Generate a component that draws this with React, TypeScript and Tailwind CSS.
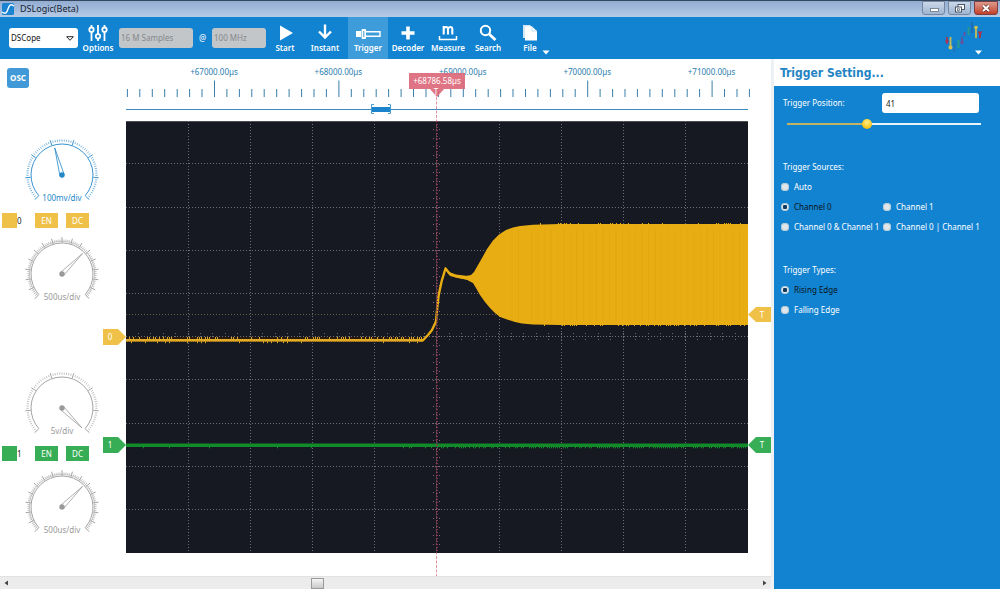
import React, { useState } from "react";

const range = (n: number) => Array.from({ length: n }, (_, i) => i);
const noise = (i: number) => {
  const v = Math.sin(i * 12.9898) * 43758.5453;
  return v - Math.floor(v);
};
const polar = (r: number, deg: number) => {
  const a = (deg * Math.PI) / 180;
  return [(r * Math.sin(a)).toFixed(2), (-r * Math.cos(a)).toFixed(2)];
};
const arc = (r: number, from: number, to: number) =>
  `M${polar(r, from).join(" ")}A${r} ${r} 0 1 1 ${polar(r, to).join(" ")}`;

/* ---------- Dial ---------- */

type DialProps = { label: string; needle: number; color: string; fine?: boolean };

function Dial({ label, needle, color, fine }: DialProps) {
  const count = fine ? 80 : 70;
  const major = fine ? 5 : 10;
  const tip = polar(fine ? 29 : 28, needle).join(" ");
  const left = polar(2.2, needle - 90).join(" ");
  const right = polar(2.2, needle + 90).join(" ");
  return (
    <svg viewBox="-38 -38 76 68" className="ml-6 h-[68px] w-[76px]" role="img" aria-label={label}>
      <g fill="none" stroke={color}>
        <path d={arc(31, -132, 132)} strokeWidth="0.9" />
        {fine && <path d={arc(32.6, -132, 132)} strokeWidth="0.5" />}
        {range(count + 1).map((i) => {
          const deg = -132 + (264 * i) / count;
          const big = i % major === 0;
          const inner = big ? 31.5 : fine ? 32.6 : 33.4;
          const outer = big ? 36.8 : fine ? 34.6 : 35.6;
          return (
            <path
              key={i}
              d={`M${polar(inner, deg).join(" ")}L${polar(outer, deg).join(" ")}`}
              strokeWidth={big ? 0.9 : 0.6}
            />
          );
        })}
        <path d={`M${left}L${tip}L${right}`} strokeWidth="0.8" />
      </g>
      <circle r="2.7" fill={color} />
      <text y="26" textAnchor="middle" fontSize="8" fill={color}>
        {label}
      </text>
    </svg>
  );
}

function ChannelRow({ index, tone }: { index: number; tone: string }) {
  return (
    <div className="flex h-[15px] items-stretch pl-[2px] text-[8px] leading-[15px]">
      <span className={`w-[15px] ${tone}`} />
      <span className="w-[18px] text-[#222]">{index}</span>
      <button className={`w-[23px] text-white ${tone}`}>EN</button>
      <button className={`ml-2 w-[23px] text-white ${tone}`}>DC</button>
    </div>
  );
}

/* ---------- Scope ---------- */

const L = 126;
const R = 748;
const T = 121;
const B = 553;
const CX = 437;
const CY = 337;

function Ruler() {
  const labels = ["+67000.00µs", "+68000.00µs", "+69000.00µs", "+70000.00µs", "+71000.00µs"];
  return (
    <g>
      {range(51).map((k) => {
        const x = 127.4 + 12.44 * k;
        const big = k % 10 === 7;
        return (
          <path key={k} d={`M${x.toFixed(1)} ${big ? 80.5 : 89}V97`} stroke="#3a7fa8" strokeWidth="1" />
        );
      })}
      {labels.map((t, i) => (
        <text key={t} x={214 + i * 124.4} y="75" textAnchor="middle" fontSize="8" fill="#2a7dae">
          {t}
        </text>
      ))}
      <path d="M126 109.5H748" stroke="#3b8dc0" />
      <rect x="372" y="107" width="18" height="5" fill="#1b83cb" />
      <path d="M374 104.5H371.5V113.5H374M388 104.5H390.5V113.5H388" fill="none" stroke="#4b9bd0" />
    </g>
  );
}

function Grid() {
  const dot = { stroke: "#6c6e76", strokeWidth: 1, strokeDasharray: "1 2" };
  return (
    <g fill="none">
      <rect x={L} y={T} width={R - L} height={B - T} fill="#161822" />
      <path d={`M${L} ${T + 0.5}H${R}`} stroke="#4d4f55" />
      {range(9).map((i) => (
        <path key={`v${i}`} d={`M${Math.floor(188.5 + i * 62.1) + 0.5} ${T}V${B}`} {...dot} />
      ))}
      {range(9).map((i) => (
        <path key={`h${i}`} d={`M${L} ${Math.floor(163.8 + i * 43.2) + 0.5}H${R}`} {...dot} />
      ))}
      <path d={`M${L} 314.5H${R}`} {...dot} stroke="#665d44" />
      {range(49).map((i) => (
        <path key={`x${i}`} d={`M${Math.floor(138.4 + i * 12.43) + 0.5} 333V341`} {...dot} />
      ))}
      {range(49).map((i) => (
        <path key={`y${i}`} d={`M433 ${Math.floor(129.6 + i * 8.64) + 0.5}H442`} {...dot} stroke="#85606f" />
      ))}
    </g>
  );
}

const baselineNoise = range(148)
  .map((i) => {
    const x = 127.5 + i * 2;
    const up = noise(i) > 0.55 ? 337 : 339;
    const down = noise(i + 300) > 0.88 ? 343.2 : 341.5;
    return `M${x} ${up}V${down}`;
  })
  .join("");
const envelopeNoise = range(105)
  .map((i) => {
    const x = 538.5 + i * 2;
    return (noise(i) > 0.7 ? `M${x} 223V225` : "") + (noise(i + 77) > 0.7 ? `M${x} 324V326` : "");
  })
  .join("");
const greenNoise = range(310)
  .map((i) => {
    const x = 127.5 + i * 2;
    const limit = x < 400 ? 0.95 : x < 530 ? 0.6 : 0.3;
    return noise(i + 900) > limit ? `M${x} 446V448.3` : "";
  })
  .join("");

function Waves() {
  return (
    <g fill="none">
      <path d="M126 339.500H422" stroke="#2a1a08" strokeWidth="5" />
      <path d="M126 340.3H423" stroke="#eab029" strokeWidth="2.6" />
      <path d={baselineNoise} stroke="#d9a528" />
      <path
        d="M420 340.3H423L428 335L432 330L436 321.5L437.5 305L438.7 295L441.7 281L445.5 268.5L449.5 273.5L455 276L468 278.5L473 278"
        stroke="#e7ad12"
        strokeWidth="2.4"
        strokeLinejoin="round"
      />
      <path d="M444 271L445.5 267L449 272L456 274.5L468 276H475V281L468 280L458 278L450 276L446 270Z" fill="#e7ad12" />
      <path
        d="M466 276L471 275L474 272L478 265L482 258L487 249L493 240.5L499 234.5L506 230L513 227.5L520 226L533 224.7L560 224H748V325H560L533 324.5L522 323.6L515 322L507 319.5L500 317L495 313L490 308L485 302L480 295L476 288L473 283L468 280.5Z"
        fill="#e7ad12"
      />
      <path d={envelopeNoise} stroke="#e7ad12" />
      {range(36).map((i) => (
        <path key={i} d={`M${512 + i * 6.5} 229V321`} stroke="#d89d10" strokeWidth="0.6" opacity={(0.2 + noise(i) * 0.5).toFixed(2)} />
      ))}
      <path d="M126 445.2H748" stroke="#128b2b" strokeWidth="3.4" />
      <path d={greenNoise} stroke="#128b2b" />
    </g>
  );
}

function Scope() {
  return (
    <svg viewBox="100 59 671 517" className="block h-auto w-full" role="img" aria-label="Oscilloscope trace">
      <Ruler />
      <Grid />
      <Waves />
      <path d={`M${CX - 0.5} 97V576`} stroke="#d25f74" strokeDasharray="3 1.5" fill="none" strokeWidth="0.9" opacity="0.75" />
      <path d={`M${CX - 0.5} ${T}V${B}`} stroke="#161822" fill="none" opacity="0.3" />
      <path d={`M${CX + 0.5} ${T}V${B}`} stroke="#8d2c48" strokeDasharray="1 2" fill="none" />
      <path d="M409 73H465V89H444L437 97L430 89H409Z" fill="#dd6a7b" fillOpacity="0.93" />
      <text x="437" y="84" textAnchor="middle" fontSize="8" fill="#fff">
        +68786.58µs
      </text>
      <text x="436" y="95" textAnchor="middle" fontSize="8" fill="#fff">
        T
      </text>
      <path d={`M103 ${CY - 8}H118L126 ${CY}L118 ${CY + 8}H103Z`} fill="#efc148" />
      <path d="M103 437H118L126 445L118 453H103Z" fill="#37ad55" />
      <path d="M771 307H756L748 314.500L756 322H771Z" fill="#efc148" />
      <path d="M771 437H756L748 445L756 453H771Z" fill="#37ad55" />
      <g fill="#fff" fontSize="8" textAnchor="middle">
        <text x="110" y="340">0</text>
        <text x="110" y="448">1</text>
        <text x="762" y="318">T</text>
        <text x="762" y="448">T</text>
      </g>
    </svg>
  );
}

/* ---------- Toolbar ---------- */

function ToolButton({ label, active, children }: { label: string; active?: boolean; children: React.ReactNode }) {
  return (
    <button
      className={`flex w-10 shrink-0 flex-col items-center gap-px pt-[7px] text-[8px] leading-[10px] font-semibold text-white ${
        active ? "ml-[3px] bg-[#3f9cda]" : ""
      }`}
    >
      <svg viewBox="0 0 26 18" className="h-[18px] w-[26px]" fill="none" stroke="#fff" aria-hidden="true">
        {children}
      </svg>
      {label}
    </button>
  );
}

function Toolbar() {
  return (
    <header className="flex h-[42px] items-stretch bg-[#1283d1]">
      <div className="relative ml-[9px] self-center">
        <select aria-label="Device" className="block h-5 w-[69px] appearance-none rounded-[3px] bg-white pl-[2px] text-[8px] text-[#111]">
          <option>DSCope</option>
        </select>
        <svg viewBox="0 0 8 5" className="pointer-events-none absolute top-2 right-1 h-[5px] w-2" aria-hidden="true">
          <path d="M.7 .7H7.300L4 4.300Z" fill="#fff" stroke="#111" strokeWidth=".9" />
        </svg>
      </div>
      <ToolButton label="Options">
        <g strokeWidth="1.8">
          <path d="M6.500 1V3.500M6.500 8V17M13 1V10M13 15V17M19.500 1V3.500M19.500 8V17" />
          <circle cx="6.500" cy="5.700" r="2.200" />
          <circle cx="13" cy="12.300" r="2.200" />
          <circle cx="19.500" cy="5.700" r="2.200" />
        </g>
      </ToolButton>
      <select aria-label="Sample depth" disabled className="ml-px block h-5 w-[74px] appearance-none self-center rounded-[3px] bg-[#c3c6c9] pl-[2px] text-[8px] text-[#85888b] opacity-100">
        <option>16 M Samples</option>
      </select>
      <span className="w-[19px] self-center text-center text-[8px] text-white">@</span>
      <select aria-label="Sample rate" disabled className="block h-5 w-[54px] appearance-none self-center rounded-[3px] bg-[#c3c6c9] pl-[2px] text-[8px] text-[#85888b] opacity-100">
        <option>100 MHz</option>
      </select>
      <nav aria-label="Actions" className="-ml-px flex">
        <ToolButton label="Start">
          <path d="M8 1.500L21 9L8 16.500Z" fill="#fff" stroke="none" />
        </ToolButton>
        <ToolButton label="Instant">
          <path d="M13 0.500V13M7 7.500L13 13.500L19 7.500" strokeWidth="2.400" />
        </ToolButton>
        <ToolButton label="Trigger" active>
          <path d="M1 7H6V13H1Z" fill="#fff" stroke="none" />
          <path d="M7 5.500H10.500V14.500H7Z" fill="#fff" strokeWidth="1" />
          <path d="M8.800 7V13" stroke="#3f9cda" strokeWidth="1" />
          <path d="M11 7.700H25V12.300H11" strokeWidth="1.400" />
        </ToolButton>
        <ToolButton label="Decoder">
          <path d="M13 2.500V15.500M6.500 9H19.500" strokeWidth="3.600" />
        </ToolButton>
        <ToolButton label="Measure">
          <path d="M4.500 12V15.500H21.500V12" strokeWidth="1.500" />
          <path d="M8.700 2V10.500M8.700 5C9.500 2.500 13 2.300 13 5V10.500M13 5C13.800 2.500 17.300 2.300 17.300 5V10.500" strokeWidth="2.100" />
        </ToolButton>
        <ToolButton label="Search">
          <circle cx="10.500" cy="6.500" r="4.700" strokeWidth="2" />
          <path d="M14 10L20.500 16" strokeWidth="2.800" />
        </ToolButton>
        <div className="relative ml-[2px] flex">
          <ToolButton label="File">
            <path d="M6 1H13L17 5V14H6Z" fill="#d4e6f4" stroke="none" />
            <path d="M8 2.500H15L20 7V16.500H8Z" fill="#fff" stroke="none" />
            <path d="M15 2.500V7H20" stroke="#b5d3eb" strokeWidth="0.700" />
          </ToolButton>
          <svg viewBox="0 0 8 5" className="absolute right-0 bottom-1 h-[5px] w-2" aria-hidden="true">
            <path d="M.5 .5H7.500L4 4.500Z" fill="#fff" />
          </svg>
        </div>
      </nav>
      <button aria-label="About" className="mr-[15px] ml-auto">
        <svg viewBox="0 0 42 42" className="h-[42px] w-[42px]" fill="none" strokeWidth="1.8" aria-hidden="true">
          <path d="M4 20V24" stroke="#a8354f" />
          <path d="M2 23.500H6L4 27.500Z" fill="#b52d48" />
          <path d="M7.500 20V29" stroke="#c9bb55" />
          <circle cx="7.500" cy="30.500" r="2" fill="#d6c24d" />
          <path d="M11.500 26V35" stroke="#2373b8" />
          <path d="M15.500 23V31" stroke="#2b9a8a" />
          <path d="M19 20V25" stroke="#68509e" />
          <circle cx="19" cy="25.500" r="1.700" fill="#68509e" />
          <path d="M21.500 15V19" stroke="#68509e" />
          <path d="M25.500 10V18" stroke="#289b8b" />
          <path d="M29 5V16" stroke="#236cae" />
          <circle cx="33" cy="10.500" r="1.800" fill="#d6c24d" />
          <path d="M33 11V21" stroke="#c9bb55" />
          <path d="M37 16V21" stroke="#a8354f" />
          <path d="M34.500 14.500H39.500L37 18.500Z" fill="#b52d48" />
          <path d="M32 33.500H39L35.500 37.500Z" fill="#fff" />
        </svg>
      </button>
    </header>
  );
}

/* ---------- Trigger panel ---------- */

type RadioProps = { name: string; label: string; checked: boolean; onPick: () => void };

function Radio({ name, label, checked, onPick }: RadioProps) {
  return (
    <label className={`flex h-5 items-center gap-[5px] whitespace-nowrap ${checked ? "text-[#0b1520]" : "text-white"}`}>
      <input
        type="radio"
        name={name}
        checked={checked}
        onChange={onPick}
        className="h-2 w-2 shrink-0 appearance-none rounded-full bg-[#dfe7ec] inset-ring inset-ring-[#b8cad6] checked:bg-[radial-gradient(circle,#123a5c_0_35%,#e6eef3_45%)]"
      />
      {label}
    </label>
  );
}

function TriggerPanel() {
  const [position, setPosition] = useState(41);
  const [source, setSource] = useState("Channel 0");
  const [type, setType] = useState("Rising Edge");
  return (
    <aside className="flex w-[226px] shrink-0 flex-col bg-[#1283d1] text-[8px] text-white">
      <h1 className="h-[27px] bg-white pl-[6px] font-['DejaVu_Sans_Condensed','DejaVu_Sans',sans-serif] text-[12px] leading-[28px] font-bold text-[#2384c4]">
        Trigger Setting...
      </h1>
      <div className="flex flex-col pt-[7px] pr-[13px] pl-[7px]">
        <div className="flex h-5 items-center justify-between pl-[2px]">
          <label htmlFor="position">Trigger Position:</label>
          <input
            id="position"
            value={position}
            onChange={(e) => setPosition(Number(e.target.value) || 0)}
            className="mr-[8px] h-5 w-[97px] rounded-[3px] bg-white pl-1 text-[8px] text-[#222]"
          />
        </div>
        <input
          type="range"
          aria-label="Trigger position"
          min={0}
          max={100}
          value={position}
          onChange={(e) => setPosition(Number(e.target.value))}
          style={{ "--fill": `${position}%` } as React.CSSProperties}
          className="mt-[6px] mr-[6px] ml-[6px] h-[10px] appearance-none bg-[linear-gradient(to_right,#c2b261_var(--fill),#e9f5fd_var(--fill))] bg-[length:100%_2px] bg-center bg-no-repeat [&::-webkit-slider-thumb]:h-[10px] [&::-webkit-slider-thumb]:w-[10px] [&::-webkit-slider-thumb]:appearance-none [&::-webkit-slider-thumb]:rounded-full [&::-webkit-slider-thumb]:bg-[radial-gradient(circle_at_50%_35%,#fff08a,#f5c820_60%,#d9a514)]"
        />
        <fieldset className="mt-7">
          <legend className="h-5 pl-[2px] leading-[20px]">Trigger Sources:</legend>
          <div className="grid grid-cols-[102px_1fr]">
            <div className="col-span-2">
              <Radio name="source" label="Auto" checked={source === "Auto"} onPick={() => setSource("Auto")} />
            </div>
            {["Channel 0", "Channel 1", "Channel 0 & Channel 1", "Channel 0 | Channel 1"].map((s) => (
              <Radio key={s} name="source" label={s} checked={source === s} onPick={() => setSource(s)} />
            ))}
          </div>
        </fieldset>
        <fieldset className="mt-[23px]">
          <legend className="h-5 pl-[2px] leading-[20px]">Trigger Types:</legend>
          {["Rising Edge", "Falling Edge"].map((t) => (
            <Radio key={t} name="type" label={t} checked={type === t} onPick={() => setType(t)} />
          ))}
        </fieldset>
      </div>
    </aside>
  );
}

/* ---------- Window ---------- */

function TitleBar() {
  return (
    <div className="flex h-[17px] items-center border-t border-[#33475f] bg-linear-to-b from-[#93add2] to-[#b5cbe6] pl-[2px]">
      <svg viewBox="0 0 12 12" className="h-3 w-3" aria-hidden="true">
        <rect width="12" height="12" rx="1.500" fill="#1a84d2" />
        <path d="M0 9C4 12 5 9 6 6S8 0 12 3" fill="none" stroke="#fff" strokeWidth="1.400" />
      </svg>
      <span className="ml-[6px] text-[9px] leading-[14px] text-[#16212e]">DSLogic(Beta)</span>
      <div className="mr-[2px] ml-auto flex gap-[3px] self-start">
        <button aria-label="Minimize" className="flex h-[14px] w-[23px] justify-center rounded-b-[3px] border border-[#7486a0] bg-linear-to-b from-[#cbd8e9] to-[#9fb5d1]">
          <svg viewBox="0 0 12 12" className="h-3 w-3" aria-hidden="true">
            <rect x="2.500" y="6.500" width="8" height="3" fill="#fff" stroke="#6a7583" strokeWidth=".8" />
          </svg>
        </button>
        <button aria-label="Restore" className="flex h-[14px] w-[23px] justify-center rounded-b-[3px] border border-[#7486a0] bg-linear-to-b from-[#cbd8e9] to-[#9fb5d1]">
          <svg viewBox="0 0 12 12" className="h-3 w-3" fill="#fff" stroke="#4a5668" aria-hidden="true">
            <rect x="4" y="2.500" width="6.500" height="5" />
            <rect x="1.500" y="5" width="6" height="5" />
            <rect x="3.500" y="6.800" width="2" height="1.500" strokeWidth=".7" />
          </svg>
        </button>
        <button aria-label="Close" className="flex h-[14px] w-6 justify-center rounded-b-[3px] border border-[#7c3f40] bg-linear-to-b from-[#dd9a8d] to-[#c23d28]">
          <svg viewBox="0 0 12 12" className="h-3 w-3" fill="none" aria-hidden="true">
            <path d="M3 3.500L9 9M9 3.500L3 9" stroke="#5c2a28" strokeWidth="3.200" />
            <path d="M3 3.500L9 9M9 3.500L3 9" stroke="#fff" strokeWidth="2" />
          </svg>
        </button>
      </div>
    </div>
  );
}

function HorizontalScroll() {
  return (
    <div className="flex h-[13px] items-center border-t border-[#e2e2e2] bg-[#ececec]">
      <button aria-label="Scroll left" className="flex w-3 justify-center">
        <svg viewBox="0 0 4 6" className="h-[6px] w-1" aria-hidden="true">
          <path d="M4 .5V5.500L.5 3Z" fill="#444" />
        </svg>
      </button>
      <input
        type="range"
        aria-label="Scroll position"
        min={0}
        max={1000}
        defaultValue={408}
        className="h-3 min-w-0 flex-1 appearance-none bg-transparent [&::-webkit-slider-thumb]:h-[11px] [&::-webkit-slider-thumb]:w-[13px] [&::-webkit-slider-thumb]:appearance-none [&::-webkit-slider-thumb]:border [&::-webkit-slider-thumb]:border-[#9a9a9a] [&::-webkit-slider-thumb]:bg-linear-to-b [&::-webkit-slider-thumb]:from-[#f4f4f4] [&::-webkit-slider-thumb]:to-[#c9c9c9]"
      />
      <button aria-label="Scroll right" className="flex w-3 justify-center">
        <svg viewBox="0 0 4 6" className="h-[6px] w-1" aria-hidden="true">
          <path d="M0 .5V5.500L3.500 3Z" fill="#444" />
        </svg>
      </button>
    </div>
  );
}

export default function App() {
  return (
    <div className="flex min-h-screen flex-col bg-white font-['Noto_Sans','Open_Sans',sans-serif]">
      <TitleBar />
      <Toolbar />
      <div className="flex flex-1 items-stretch">
        <main className="flex min-w-0 flex-1 flex-col">
          <div className="flex flex-1 items-start">
            <section aria-label="Channels" className="flex w-[100px] shrink-0 flex-col pt-[9px]">
              <button className="ml-[7px] h-5 w-[22px] rounded-[3px] bg-[#419ad7] text-[8px] font-bold text-white">OSC</button>
              <div className="mt-[49px] flex flex-col gap-2">
                <Dial label="100mv/div" needle={-15} color="#2387c8" />
                <ChannelRow index={0} tone="bg-[#efc148]" />
                <Dial label="500us/div" needle={45} color="#999999" fine />
              </div>
              <div className="mt-[66px] flex flex-col gap-2">
                <Dial label="5v/div" needle={135} color="#999999" />
                <ChannelRow index={1} tone="bg-[#37ad55]" />
                <Dial label="500us/div" needle={45} color="#999999" fine />
              </div>
            </section>
            <div className="min-w-0 flex-1">
              <Scope />
            </div>
          </div>
          <HorizontalScroll />
        </main>
        <div className="w-[3px] shrink-0 bg-[#eef1f4]" />
        <TriggerPanel />
      </div>
    </div>
  );
}
